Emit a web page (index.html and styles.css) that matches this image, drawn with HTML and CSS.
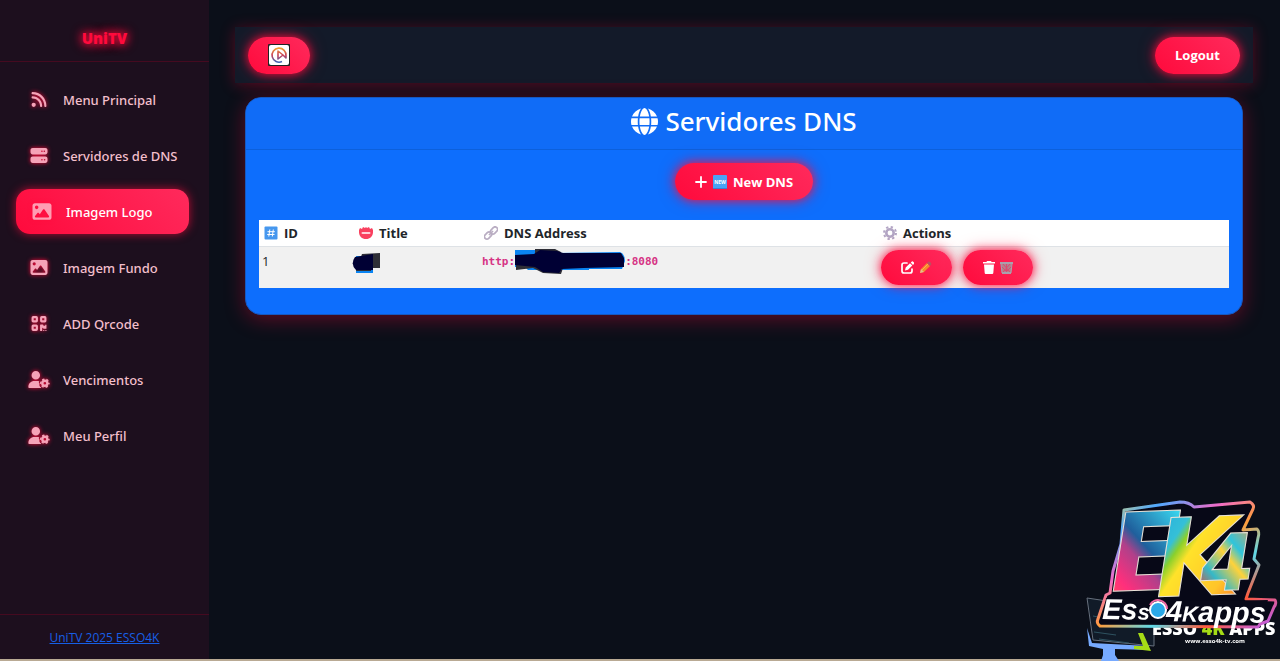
FILE: index.html
```
<!DOCTYPE html>
<html lang="pt-BR">
<head>
    <meta charset="UTF-8">
    <meta name="viewport" content="width=device-width, initial-scale=1.0">
    <title>UniTV - Servidores DNS</title>
    <link rel="stylesheet" href="styles.css">
</head>
<body>
    <!-- icones compartilhados -->
    <svg class="sprite" aria-hidden="true">
        <symbol id="i-rss" viewBox="0 0 448 512"><path d="M0 64C0 46.3 14.3 32 32 32c229.8 0 416 186.2 416 416c0 17.7-14.3 32-32 32s-32-14.3-32-32C384 253.6 226.4 96 32 96C14.3 96 0 81.7 0 64zM0 416a64 64 0 1 1 128 0A64 64 0 1 1 0 416zM32 160c159.1 0 288 128.9 288 288c0 17.7-14.3 32-32 32s-32-14.3-32-32c0-123.7-100.3-224-224-224c-17.7 0-32-14.3-32-32s14.3-32 32-32z"/></symbol>
        <symbol id="i-server" viewBox="0 0 512 512"><path d="M64 32C28.7 32 0 60.7 0 96v64c0 35.3 28.7 64 64 64H448c35.3 0 64-28.7 64-64V96c0-35.3-28.7-64-64-64H64zm280 72a24 24 0 1 1 0 48 24 24 0 1 1 0-48zm48 24a24 24 0 1 1 48 0 24 24 0 1 1 -48 0zM64 288c-35.3 0-64 28.7-64 64v64c0 35.3 28.7 64 64 64H448c35.3 0 64-28.7 64-64V352c0-35.3-28.7-64-64-64H64zm280 72a24 24 0 1 1 0 48 24 24 0 1 1 0-48zm56 24a24 24 0 1 1 48 0 24 24 0 1 1 -48 0z"/></symbol>
        <symbol id="i-image" viewBox="0 0 512 512"><path d="M0 96C0 60.7 28.7 32 64 32H448c35.3 0 64 28.7 64 64V416c0 35.3-28.7 64-64 64H64c-35.3 0-64-28.7-64-64V96zM323.8 202.5c-4.5-6.6-11.9-10.5-19.8-10.5s-15.4 3.9-19.8 10.5l-87 127.6L170.7 297c-4.6-5.7-11.5-9-18.7-9s-14.2 3.3-18.7 9l-64 80c-5.8 7.2-6.9 17.1-2.9 25.4s12.4 13.6 21.6 13.6h96 32H424c8.9 0 17.1-4.9 21.2-12.8s3.6-17.4-1.4-24.7l-120-176zM112 192a48 48 0 1 0 0-96 48 48 0 1 0 0 96z"/></symbol>
        <symbol id="i-qrcode" viewBox="0 0 448 512">
            <g fill="none" stroke="currentColor" stroke-width="64" stroke-linejoin="round"><rect x="32" y="64" width="128" height="128" rx="16"/><rect x="288" y="64" width="128" height="128" rx="16"/><rect x="32" y="320" width="128" height="128" rx="16"/></g>
            <path d="M256 304q0-16 16-16h64q16 0 16 16t16 16h32q16 0 16-16t16-16 16 16v96q0 16-16 16h-64q-16 0-16-16t-16-16-16 16v64q0 16-16 16h-32q-16 0-16-16zM352 448h32v32h-32zM416 448h32v32h-32z"/>
        </symbol>
        <symbol id="i-user-gear" viewBox="0 0 640 512">
            <path d="M224 0a128 128 0 1 1 0 256 128 128 0 1 1 0-256zM178 304h92c20 0 40 3 58 10-16 14-16 30-6 48l18 32c-12 12-16 24-10 38l18 34c7 12 17 22 31 25 4 9 8 15 12 21H30c-17 0-30-13-30-30C0 384 80 304 178 304z"/>
            <g fill="none" stroke="currentColor"><circle cx="496" cy="368" r="76" stroke-width="72"/><circle cx="496" cy="368" r="122" stroke-width="46" stroke-dasharray="66 62" stroke-dashoffset="33"/></g>
        </symbol>
        <symbol id="i-globe" viewBox="0 0 512 512"><path d="M352 256c0 22.2-1.2 43.6-3.3 64H163.3c-2.2-20.4-3.3-41.8-3.3-64s1.2-43.6 3.3-64H348.7c2.2 20.4 3.3 41.8 3.3 64zm28.8-64H503.9c5.3 20.5 8.1 41.9 8.1 64s-2.8 43.5-8.1 64H380.8c2.1-20.6 3.2-42 3.2-64s-1.1-43.4-3.2-64zm112.6-32H376.7c-10-63.9-29.8-117.4-55.3-151.6c78.3 20.7 142 77.5 171.9 151.6zm-149.1 0H167.7c6.1-36.4 15.5-68.6 27-94.7c10.5-23.6 22.2-40.7 33.5-51.5C239.4 3.2 248.7 0 256 0s16.6 3.2 27.8 13.8c11.3 10.8 23 27.9 33.5 51.5c11.6 26 20.9 58.2 27 94.7zm-209 0H18.6C48.6 85.9 112.2 29.1 190.6 8.4C165.1 42.6 145.3 96.1 135.3 160zM8.1 192H131.2c-2.1 20.6-3.2 42-3.2 64s1.1 43.4 3.2 64H8.1C2.8 299.5 0 278.1 0 256s2.8-43.5 8.1-64zM194.7 446.6c-11.6-26-20.9-58.2-27-94.6H344.3c-6.1 36.4-15.5 68.6-27 94.6c-10.5 23.6-22.2 40.7-33.5 51.5C272.6 508.8 263.3 512 256 512s-16.6-3.2-27.8-13.8c-11.3-10.8-23-27.9-33.5-51.5zM135.3 352c10 63.9 29.8 117.4 55.3 151.6C112.2 482.9 48.6 426.1 18.6 352H135.3zm358.1 0c-30 74.1-93.6 130.9-171.9 151.6c25.5-34.2 45.2-87.7 55.3-151.6H493.4z"/></symbol>
    </svg>

    <div class="wrapper">
        <aside class="sidebar">
            <div class="brand">UniTV</div>
            <nav class="menu">
                <a href="#"><svg class="icon"><use href="#i-rss"/></svg>Menu Principal</a>
                <a href="#"><svg class="icon"><use href="#i-server"/></svg>Servidores de DNS</a>
                <a href="#" class="active"><svg class="icon"><use href="#i-image"/></svg>Imagem Logo</a>
                <a href="#"><svg class="icon"><use href="#i-image"/></svg>Imagem Fundo</a>
                <a href="#"><svg class="icon"><use href="#i-qrcode"/></svg>ADD Qrcode</a>
                <a href="#"><svg class="icon"><use href="#i-user-gear"/></svg>Vencimentos</a>
                <a href="#"><svg class="icon"><use href="#i-user-gear"/></svg>Meu Perfil</a>
            </nav>
            <footer class="sidebar-footer"><a href="#">UniTV 2025 ESSO4K</a></footer>
        </aside>

        <main class="content">
            <header class="topbar">
                <button class="btn btn-logo" aria-label="Menu">
                    <svg width="22" height="22" viewBox="0 0 22 22">
                        <defs><linearGradient id="ring" x1="0" y1="0" x2="0" y2="1"><stop offset="0" stop-color="#f0a030"/><stop offset=".5" stop-color="#c8405a"/><stop offset="1" stop-color="#3c64b4"/></linearGradient></defs>
                        <rect width="22" height="22" rx="1" fill="#222"/>
                        <rect x="1" y="1" width="20" height="20" rx="2" fill="#fff"/>
                        <path d="M14 17.500A7 7 0 1 1 18 12v2l-3-3-5 4V7l5 4" fill="none" stroke="url(#ring)" stroke-width="1.600" stroke-linejoin="round"/>
                    </svg>
                </button>
                <button class="btn btn-logout">Logout</button>
            </header>

            <section class="card">
                <h1 class="card-title"><svg><use href="#i-globe"/></svg>Servidores DNS</h1>
                <div class="card-body">
                    <button class="btn btn-new">
                        <svg width="12" height="12" viewBox="0 0 12 12"><path d="M6 1v10M1 6h10" stroke="#fff" stroke-width="1.800" stroke-linecap="round"/></svg>
                        <svg width="14" height="14" viewBox="0 0 14 14"><rect width="14" height="14" rx="1" fill="#4aa3f5"/><path d="M0 13h14v1H0z" fill="#3e7fd0"/><text x="7" y="9" class="tiny">NEW</text></svg>
                        New DNS
                    </button>
                    <table class="dns-table">
                        <thead>
                            <tr>
                                <th class="col-id"><span class="th"><svg width="14" height="14" viewBox="0 0 14 14"><rect x=".5" y=".5" width="13" height="13" rx="1" fill="#4697ee"/><path d="M5.800 3.500l-1 7M9.300 3.500l-1 7M3.500 5.700h7.300M3.200 8.500h7.300" stroke="#fff"/></svg>ID</span></th>
                                <th class="col-title"><span class="th"><svg width="14" height="14" viewBox="0 0 14 14"><path d="M0 4l1-2 2 1 1-2 2 1 1-1 1 1 2-1 1 2 2-1 1 2c.5 5-2 9-7 9S-.5 9 0 4z" fill="#f9405f"/><rect x="2.500" y="6" width="9" height="2" rx="1" fill="#ffd0d8"/></svg>Title</span></th>
                                <th class="col-dns"><span class="th"><svg width="14" height="14" viewBox="0 0 14 14"><g fill="none" stroke="#b9adc2" stroke-width="1.700"><rect x="6" y="2" width="8" height="5" rx="2.500" transform="rotate(-45 10 4.500)"/><rect x="0" y="7" width="8" height="5" rx="2.500" transform="rotate(-45 4 9.500)"/><path d="M5 9l4-4"/></g></svg>DNS Address</span></th>
                                <th class="col-actions"><span class="th"><svg width="14" height="14" viewBox="0 0 14 14"><g fill="none" stroke="#b3a5c4"><circle cx="7" cy="7" r="6" stroke-width="2" stroke-dasharray="2.300 2.412"/><circle cx="7" cy="7" r="3.700" stroke-width="2.600"/></g></svg>Actions</span></th>
                            </tr>
                        </thead>
                        <tbody>
                            <tr>
                                <td>1</td>
                                <td>
                                    <svg class="blot-title" width="30" height="22" viewBox="0 0 30 22" role="img" aria-label="oculto"><path d="M4 4h17v17H4z" fill="#0a84f2"/><path d="M10 2l18-1v15h-9v3H4z" fill="#2e2e36"/><path d="M3 5l18-3v16H4Q-2 12 3 5z" fill="#000034"/></svg>
                                </td>
                                <td class="address"><code>http:<svg class="blot-dns" width="110" height="26" viewBox="0 0 110 26" role="img" aria-label="oculto"><path d="M0 1h20v3h20l65-1q5 2 5 9l-3 8H74v1H13l-3-3H0z" fill="#0a84f2"/><path d="M20 0h20l6 3v18l2-2-2 6-18-1-10-5-17 2V6h19z" fill="#2e2e36"/><path d="M0 6l19-1 6-4 17 1 6 2h58l3 5v9l-40 1-22 1-3 4-16-1-8-5-20-2z" fill="#000034"/></svg>:8080</code></td>
                                <td>
                                    <div class="actions">
                                        <button class="btn btn-edit" aria-label="Editar">
                                            <svg width="13" height="13" viewBox="0 0 13 13"><path d="M6 2H3Q1 2 1 4v6q0 2 2 2h6q2 0 2-2V8" fill="none" stroke="#fff" stroke-width="1.700" stroke-linecap="round"/><path d="M4 9.500l.7-3L9 2.300l2.300 2.300L7 8.800zM9.700 1.600l1.200-1.200q.5-.4 1 0l1.200 1.200q.3.5 0 1L12 3.900z" fill="#fff"/></svg>
                                            <svg width="13" height="13" viewBox="0 0 13 13"><path d="M1 12l1-4 6-6 3 3-6 6z" fill="#f78a2d"/><path d="M8 2l1.500-1.500q2-.3 3 2.500L11 5z" fill="#bd5060"/><path d="M1 12l1-4 3 3z" fill="#e6bd8c"/><path d="M3 9l6-6" stroke="#ffac54"/></svg>
                                        </button>
                                        <button class="btn btn-delete" aria-label="Excluir">
                                            <svg width="12" height="13" viewBox="0 0 12 13"><path d="M4 0h4l.6 1H12v1.500H0V1h3.400zM1 3.500h10l-.7 8.500q-.1 1-1 1H2.700q-.9 0-1-1z" fill="#fff"/></svg>
                                            <svg width="13" height="13" viewBox="0 0 13 13"><path d="M1 2h11l-1 10H2z" fill="#b4818f"/><path d="M3 3l7 8M10 3l-7 8M6.500 3v8M2 6l5 5M11 6l-5 5" stroke="#db4c70"/><path d="M0 1h13v2H0zM2 11h9v2H2z" fill="#aaa0ad"/><path d="M1 3l1 9M12 3l-1 9" stroke="#aaa0ad"/></svg>
                                        </button>
                                    </div>
                                </td>
                            </tr>
                        </tbody>
                    </table>
                </div>
            </section>
        </main>
    </div>

    <!-- marca d'agua -->
    <svg class="watermark" width="205" height="171" viewBox="0 0 205 171" role="img" aria-label="EK4 Esso4Kapps">
        <defs>
            <linearGradient id="edge" x1="0" y1="0" x2="1" y2="1"><stop offset="0" stop-color="#ffe14a"/><stop offset=".18" stop-color="#4fa8ff"/><stop offset=".35" stop-color="#f06bc8"/><stop offset=".5" stop-color="#ff9d3c"/><stop offset=".65" stop-color="#5fd8e8"/><stop offset=".8" stop-color="#ff5a3c"/><stop offset="1" stop-color="#b45cff"/></linearGradient>
            <linearGradient id="e" x1="0" y1="1" x2=".7" y2="0"><stop offset="0" stop-color="#ff5a4e"/><stop offset=".25" stop-color="#ff2f7c"/><stop offset=".48" stop-color="#b0408a"/><stop offset=".6" stop-color="#1f5f9c"/><stop offset="1" stop-color="#39d5ee"/></linearGradient>
            <linearGradient id="k" x1="0" y1="0" x2="1" y2="1"><stop offset="0" stop-color="#1fa5e0"/><stop offset=".28" stop-color="#35c0d8"/><stop offset=".34" stop-color="#8ad02c"/><stop offset=".42" stop-color="#ffe22a"/><stop offset=".7" stop-color="#ffc52a"/><stop offset="1" stop-color="#ff4b2a"/></linearGradient>
            <linearGradient id="four" x1="1" y1="0" x2=".2" y2="1"><stop offset="0" stop-color="#ff9a3a"/><stop offset=".35" stop-color="#2fc4dc"/><stop offset=".5" stop-color="#ffd23a"/><stop offset=".75" stop-color="#35b8c8"/><stop offset="1" stop-color="#ff3a1e"/></linearGradient>
        </defs>
        <path d="M12 108l67 10v38l-61-6z" fill="#111b28" stroke="#67707d"/>
        <path d="M18 126l42 8M19 142l22 3M24 149l30 4" stroke="#2e5260"/>
        <path d="M12 138l5 15 57 3v4l-34-1v6l4 6H26l2-6v-6l-14-3z" fill="#77aaff"/>
        <path d="M68 143l8 18-17-2v-3h9l-5-13z" fill="#a5dc16"/>
        <text x="77" y="145" class="wm-back">ESSO <tspan fill="#a5dc16">4K</tspan> APPS</text>
        <path d="M49 20l56-8q9 0 14 5l56-5q5 3 3 7l-10 21 14-1q3 3 1 9l-4 21 5 6-11 28-2 6 29 1q2 3-1 7l-6 14-8 3-2 3-158-1q-4-3-2-7l8-24 4-2 3-22 8-27z" fill="#070817" stroke="url(#edge)" stroke-width="3" stroke-linejoin="round"/>
        <g transform="rotate(-2 100 100)">
            <text x="36" y="99" class="wm-e" fill="url(#e)">E</text>
            <text x="81" y="106" class="wm-k" fill="url(#k)">K</text>
            <text x="126" y="102" class="wm-four" fill="url(#four)">4</text>
        </g>
        <path d="M31 108l112 3 50-1-7 19-12 3-145-1z" fill="#080918"/>
        <g transform="rotate(1 28 129)">
            <text x="27" y="129" class="wm-name">Es<tspan class="wm-s">s</tspan></text>
            <text x="91" y="130" class="wm-name">4<tspan class="wm-k2">K</tspan>apps</text>
        </g>
        <circle cx="83" cy="120" r="8" fill="#2ba9e8" stroke="#fff" stroke-width="2"/>
        <path d="M75 115a9 9 0 0 1 17 4" fill="none" stroke="#f36aa8" stroke-width="2"/>
        <text x="140" y="153" class="wm-url">www.esso4k-tv.com</text>
    </svg>
</body>
</html>
```
FILE: styles.css
```
* {
    box-sizing: border-box;
}

body {
    margin: 0;
    font-family: "Segoe UI", "Open Sans", sans-serif;
    font-size: 13px;
    background-color: #0b0f19;
    color: #212529;
}

.sprite {
    display: none;
}

.icon, .card-title svg {
    fill: currentColor;
}

.wrapper {
    display: flex;
    min-height: 100vh;
    border-bottom: 2px solid #b9aa94;
}

/* menu lateral */
.sidebar {
    display: flex;
    flex-direction: column;
    flex: 0 0 209px;
    background-color: #1d0f1e;
}

.brand {
    height: 62px;
    padding-top: 15px;
    border-bottom: 1px solid #450a20;
    color: #ff0a3c;
    font-size: 15px;
    font-weight: 800;
    line-height: 46px;
    text-align: center;
    text-shadow: 0 0 8px #ff0a3c, 0 0 12px #ff0a3c;
}

.menu {
    display: flex;
    flex: 1;
    flex-direction: column;
    gap: 11px;
    padding: 15px 20px 15px 16px;
    font-family: "Segoe UI", "Noto Sans", sans-serif;
}

.menu a {
    display: flex;
    align-items: center;
    gap: 13px;
    height: 45px;
    padding-left: 12px;
    border-radius: 14px;
    color: #f3bfcc;
    font-weight: 500;
    text-decoration: none;
}

.menu .icon {
    width: 22px;
    height: 17px;
    color: #f5a3b8;
    filter: drop-shadow(0 0 2px #ff0a3c);
}

.menu a.active {
    padding-left: 15px;
    background: linear-gradient(45deg, #ff0a3c, #ff2a5c);
    box-shadow: 0 0 10px rgba(255, 10, 60, 0.7);
    color: #fff;
}

.menu .active .icon {
    height: 19px;
    color: #ff9db2;
}

.sidebar-footer {
    height: 45px;
    border-top: 1px solid #450a20;
    font-size: 12px;
    line-height: 45px;
    text-align: center;
}

.sidebar-footer a {
    color: #175fe6;
}

/* conteudo */
.content {
    flex: 1;
    min-width: 0;
    padding: 27px 27px 27px 26px;
}

.topbar {
    display: flex;
    align-items: center;
    justify-content: space-between;
    height: 56px;
    padding: 0 13px;
    background-color: #131a29;
    box-shadow: 0 2px 14px rgba(255, 10, 60, 0.3);
}

.btn {
    display: inline-flex;
    align-items: center;
    justify-content: center;
    gap: 6px;
    height: 37px;
    padding: 0 20px;
    border: none;
    border-radius: 20px;
    background: linear-gradient(45deg, #ff0a3c, #ff2a5c);
    box-shadow: 0 0 8px rgba(255, 10, 60, 0.8), 0 0 16px rgba(255, 10, 60, 0.5);
    color: #fff;
    font-family: inherit;
    font-size: 13px;
    font-weight: 700;
    cursor: pointer;
}

.card {
    margin: 14px 10px 0;
    border: 1px solid #1659c0;
    border-radius: 16px;
    background-color: #0d6efd;
    box-shadow: 0 4px 20px rgba(255, 10, 60, 0.35);
}

.card-title {
    display: flex;
    align-items: center;
    justify-content: center;
    gap: 7px;
    height: 52px;
    margin: 0;
    padding-bottom: 5px;
    border-bottom: 1px solid #0c60dc;
    border-radius: 15px 15px 0 0;
    background-color: #106cf7;
    color: #fff;
    font-family: "Segoe UI", "Noto Sans", sans-serif;
    font-size: 26px;
    font-weight: 500;
}

.card-title svg {
    width: 27px;
    height: 27px;
}

.card-body {
    display: flex;
    flex-direction: column;
    align-items: center;
    gap: 20px;
    padding: 13px 13px 26px;
}

.tiny {
    fill: #fff;
    font-size: 5px;
    font-weight: 700;
    text-anchor: middle;
}

.dns-table {
    width: 100%;
    border-collapse: collapse;
    table-layout: fixed;
    background-color: #fff;
}

.dns-table th, .dns-table td {
    padding: 0 4px;
    text-align: left;
    vertical-align: top;
}

.dns-table th {
    height: 26px;
    border-bottom: 1px solid #dee2e6;
    vertical-align: middle;
}

.dns-table td {
    height: 41px;
    padding: 3px;
    background-color: #f1f1f1;
    line-height: 22px;
}

.th {
    display: flex;
    align-items: center;
    gap: 6px;
    padding-left: 1px;
}

.col-id {
    width: 95px;
}

.col-title {
    width: 125px;
}

.col-actions {
    width: 351px;
}

.address code {
    display: flex;
    align-items: center;
    height: 24px;
    color: #d63384;
    font-family: "DejaVu Sans Mono", monospace;
    font-size: 11px;
    font-weight: 700;
}

.blot-title {
    display: block;
    margin-left: -5px;
    margin-top: 2px;
}

.actions {
    display: flex;
    gap: 11px;
}

.actions .btn {
    gap: 5px;
    height: 35px;
}

/* marca d'agua */
.watermark {
    position: fixed;
    right: 0;
    bottom: 0;
}

.wm-e, .wm-k, .wm-four {
    font-family: "DejaVu Sans", sans-serif;
    font-style: italic;
    font-weight: 700;
    stroke: #e8e2d8;
    stroke-width: 1;
}

.wm-e, .wm-k {
    font-size: 108px;
}

.wm-four {
    font-size: 78px;
}

.wm-name {
    fill: #fff;
    font-family: "Liberation Sans", Arial, sans-serif;
    font-size: 29px;
    font-style: italic;
    font-weight: 700;
}

.wm-s, .wm-k2 {
    font-size: 22px;
}

.wm-back {
    fill: #fff;
    font-size: 18px;
    font-weight: 800;
}

.wm-url {
    fill: #fff;
    font-size: 6px;
    font-weight: 700;
    text-anchor: middle;
}
```
